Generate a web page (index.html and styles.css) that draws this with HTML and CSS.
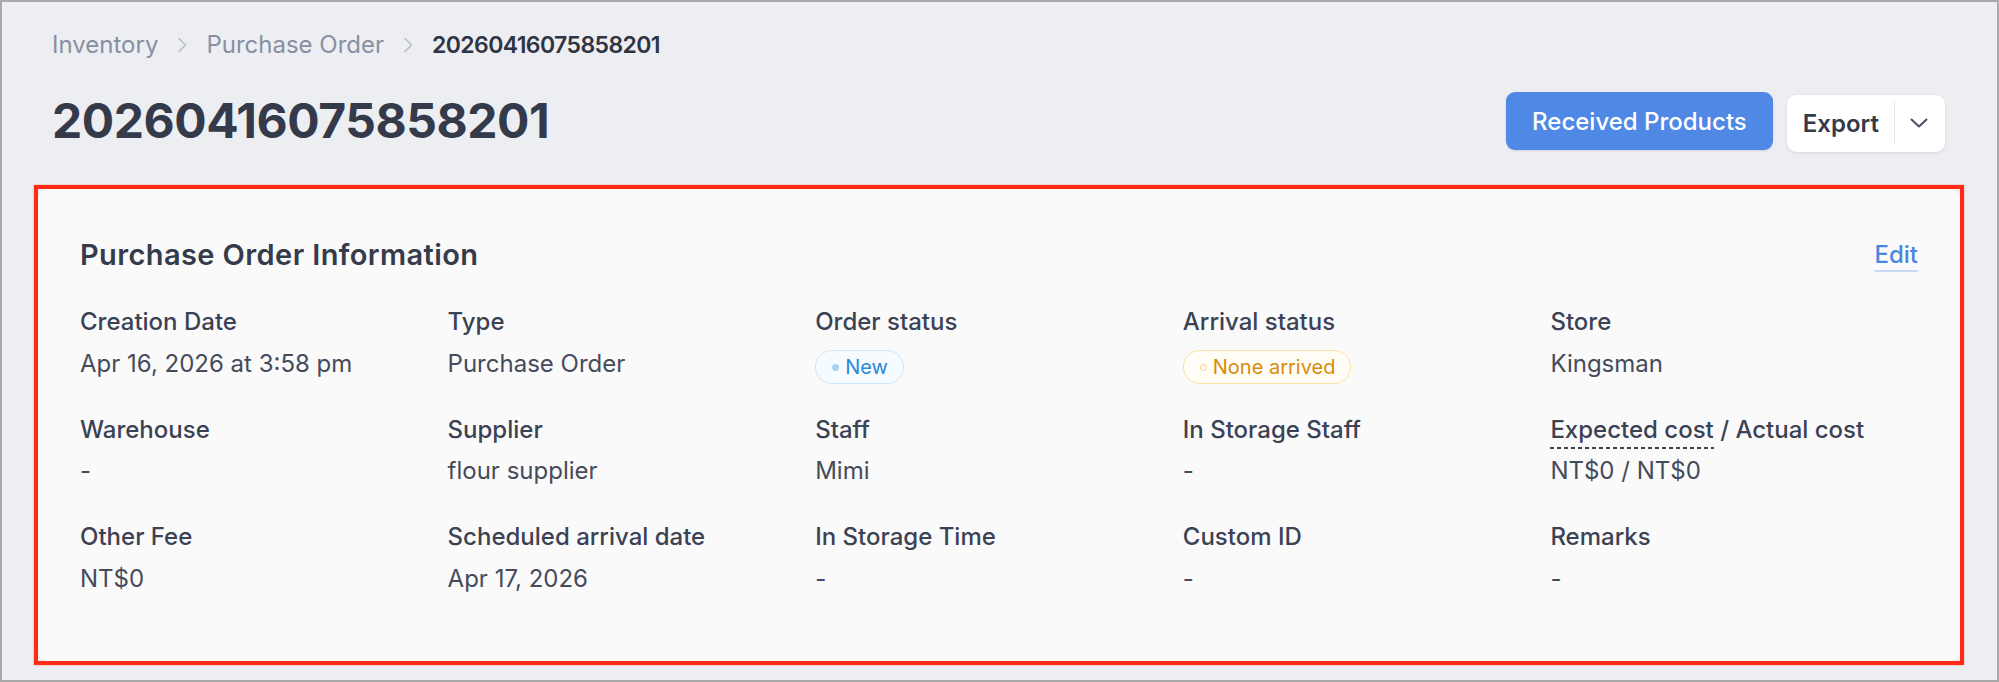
FILE: index.html
```html
<!DOCTYPE html>
<html lang="en">
<head>
<meta charset="utf-8">
<title>Purchase Order 20260416075858201</title>
<link rel="stylesheet" href="styles.css">
</head>
<body>
<div class="window">
  <header class="page-header">
    <nav class="breadcrumb">
      <a class="crumb">Inventory</a>
      <svg class="crumb-sep" viewBox="0 0 10 16" width="10" height="16"><path d="M2 1.5 L8.5 8 L2 14.5" fill="none" stroke="currentColor" stroke-width="1.6" stroke-linecap="round" stroke-linejoin="round"/></svg>
      <a class="crumb">Purchase Order</a>
      <svg class="crumb-sep" viewBox="0 0 10 16" width="10" height="16"><path d="M2 1.5 L8.5 8 L2 14.5" fill="none" stroke="currentColor" stroke-width="1.6" stroke-linecap="round" stroke-linejoin="round"/></svg>
      <span class="crumb-current">20260416075858201</span>
    </nav>
    <div class="title-row">
      <h1 class="page-title">20260416075858201</h1>
      <div class="actions">
        <button class="btn-primary">Received Products</button>
        <div class="btn-group">
          <button class="btn-group-main">Export</button>
          <span class="btn-divider"></span>
          <button class="btn-caret"><svg viewBox="0 0 18 10" width="18" height="10"><path d="M1.5 1.5 L9 8.5 L16.5 1.5" fill="none" stroke="currentColor" stroke-width="2" stroke-linecap="round" stroke-linejoin="round"/></svg></button>
        </div>
      </div>
    </div>
  </header>

  <section class="highlight">
    <div class="card">
      <div class="card-head">
        <h2 class="card-title">Purchase Order Information</h2>
        <a class="edit-link">Edit</a>
      </div>
      <div class="info-grid">
        <div class="field"><div class="field-label">Creation Date</div><div class="field-value">Apr 16, 2026 at 3:58 pm</div></div>
        <div class="field"><div class="field-label">Type</div><div class="field-value">Purchase Order</div></div>
        <div class="field"><div class="field-label">Order status</div><div class="field-value"><span class="badge badge-new"><span class="badge-dot"></span>New</span></div></div>
        <div class="field"><div class="field-label">Arrival status</div><div class="field-value"><span class="badge badge-pending"><span class="badge-dot"></span>None arrived</span></div></div>
        <div class="field"><div class="field-label">Store</div><div class="field-value">Kingsman</div></div>

        <div class="field"><div class="field-label">Warehouse</div><div class="field-value">-</div></div>
        <div class="field"><div class="field-label">Supplier</div><div class="field-value">flour supplier</div></div>
        <div class="field"><div class="field-label">Staff</div><div class="field-value">Mimi</div></div>
        <div class="field"><div class="field-label">In Storage Staff</div><div class="field-value">-</div></div>
        <div class="field"><div class="field-label"><span class="dashed">Expected cost</span> / Actual cost</div><div class="field-value">NT$0 / NT$0</div></div>

        <div class="field"><div class="field-label">Other Fee</div><div class="field-value">NT$0</div></div>
        <div class="field"><div class="field-label">Scheduled arrival date</div><div class="field-value">Apr 17, 2026</div></div>
        <div class="field"><div class="field-label">In Storage Time</div><div class="field-value">-</div></div>
        <div class="field"><div class="field-label">Custom ID</div><div class="field-value">-</div></div>
        <div class="field"><div class="field-label">Remarks</div><div class="field-value">-</div></div>
      </div>
    </div>
  </section>
</div>
</body>
</html>
```

FILE: styles.css
```css
html, body {
  margin: 0;
  padding: 0;
  background: #ffffff;
}

body {
  font-family: Inter, "Noto Sans", "Liberation Sans", sans-serif;
  color: #3b4254;
}

.window {
  box-sizing: border-box;
  width: 1999px;
  height: 682px;
  border: 2px solid #a9a9ab;
  background: #edeef1;
  padding: 0 33px 0 32px;
  overflow: hidden;
}

/* ---------- header ---------- */
.page-header {
  padding: 28px 19px 0 18px;
}

.breadcrumb {
  display: flex;
  align-items: center;
  height: 30px;
  font-size: 24px;
  line-height: 30px;
}

.crumb {
  color: #8790a3;
}

.crumb-sep {
  color: #b7bcc6;
  margin: 0 19px 0 19px;
}

.crumb-current {
  color: #2f3443;
  font-size: 23px;
  font-weight: 600;
  letter-spacing: -0.6px;
}

.title-row {
  display: flex;
  align-items: center;
  justify-content: space-between;
  margin-top: 32px;
  height: 58px;
}

.page-title {
  margin: 0;
  font-size: 48px;
  line-height: 58px;
  font-weight: 700;
  color: #343a4a;
  letter-spacing: -0.45px;
}

.actions {
  display: flex;
  align-items: center;
  gap: 14px;
}

button {
  font-family: inherit;
  border: 0;
  background: none;
  cursor: pointer;
}

.btn-primary {
  height: 58px;
  padding: 0 26px;
  border-radius: 9px;
  background: #5088e6;
  color: #ffffff;
  font-size: 24px;
  font-weight: 500;
  box-shadow: 0 1px 2px rgba(30, 60, 120, 0.15);
}

.btn-group {
  display: flex;
  align-items: center;
  height: 57px;
  margin-top: 4px;
  border-radius: 9px;
  background: #ffffff;
  box-shadow: 0 1px 3px rgba(40, 50, 70, 0.12);
}

.btn-group-main {
  height: 100%;
  padding: 0 15px 0 16px;
  font-size: 24px;
  font-weight: 600;
  color: #343a4a;
}

.btn-divider {
  width: 1px;
  height: 43px;
  background: #e4e7eb;
}

.btn-caret {
  height: 100%;
  padding: 0 17px 0 15px;
  color: #4a5062;
  display: flex;
  align-items: center;
}

/* ---------- card ---------- */
.highlight {
  box-sizing: border-box;
  margin-top: 35px;
  height: 480px;
  border: 4px solid #ff2b17;
  box-shadow: 0 0 2px rgba(255, 60, 40, 0.45);
}

.card {
  box-sizing: border-box;
  height: 100%;
  border-radius: 10px;
  background: #fafafa;
  padding: 49px 42px 0 42px;
}

.card-head {
  display: flex;
  align-items: center;
  justify-content: space-between;
}

.card-title {
  margin: 0;
  font-size: 29px;
  line-height: 34px;
  font-weight: 600;
  letter-spacing: 0.4px;
  color: #353b4b;
}

.edit-link {
  font-size: 24px;
  line-height: 30px;
  font-weight: 500;
  color: #4a86e0;
  text-decoration: underline;
  text-decoration-color: #c7daf7;
  text-decoration-thickness: 2px;
  text-underline-offset: 7px;
}

.info-grid {
  display: grid;
  grid-template-columns: repeat(5, 1fr);
  row-gap: 34px;
  margin-top: 35px;
}

.field-label {
  font-size: 24px;
  line-height: 30px;
  font-weight: 500;
  color: #3b4254;
  white-space: nowrap;
}

.field-value {
  margin-top: 9.5px;
  height: 34px;
  font-size: 24px;
  line-height: 34px;
  color: #454b5b;
  white-space: nowrap;
}

.dashed {
  padding-bottom: 5px;
  background-image: repeating-linear-gradient(90deg, #3d4353 0 4px, transparent 4px 7px);
  background-size: 100% 2px;
  background-repeat: no-repeat;
  background-position: 0 100%;
}

/* ---------- badges ---------- */
.badge {
  box-sizing: border-box;
  display: inline-flex;
  align-items: center;
  gap: 6px;
  height: 34px;
  margin-top: 3.5px;
  padding: 0 15px 0 16px;
  border-radius: 17px;
  border: 1.5px solid;
  font-size: 20px;
  line-height: 20px;
  vertical-align: top;
}

.badge-dot {
  box-sizing: border-box;
  width: 7px;
  height: 7px;
  border-radius: 50%;
}

.badge-new {
  border-color: #cfe5fa;
  background: #f6fbff;
  color: #2a88d8;
}

.badge-new .badge-dot {
  background: #a9d3f6;
}

.badge-pending {
  border-color: #fce0a3;
  background: #fffdf5;
  color: #d98a0b;
}

.badge-pending .badge-dot {
  background: #ffffff;
  border: 1.5px solid #f6cd84;
}
```
